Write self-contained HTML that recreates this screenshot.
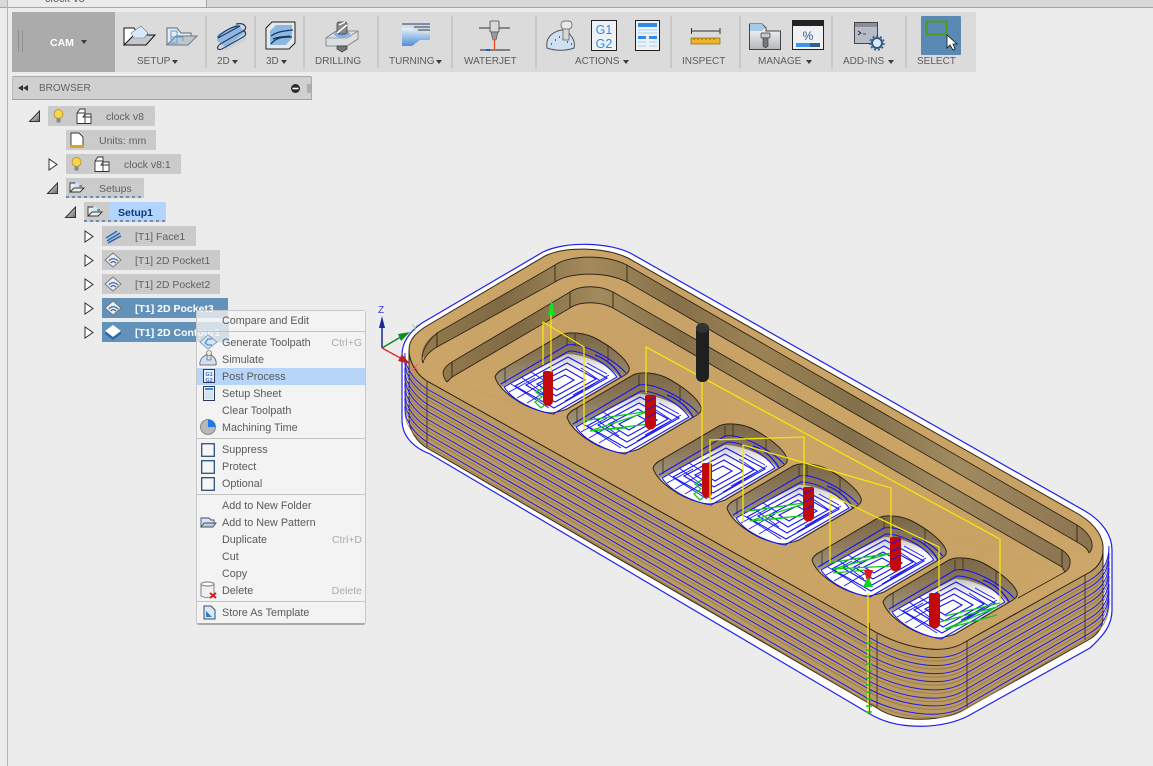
<!DOCTYPE html>
<html><head><meta charset="utf-8"><title>CAM</title>
<style>
html,body{margin:0;padding:0;width:1153px;height:766px;overflow:hidden;background:#ececec;font-family:"Liberation Sans",sans-serif}
.a{position:absolute}
.t{position:absolute;white-space:nowrap;font-size:10px;line-height:12px;color:#5c5c5c;margin-top:2px}
.b{position:absolute;background:#cbcbcb;height:20px}
.r{position:absolute;white-space:nowrap;font-size:10.5px;line-height:12px;color:#606060;margin-top:1px}
.m{position:absolute;left:222px;white-space:nowrap;font-size:10.8px;line-height:12px;color:#5a5a5a;margin-top:1px}
.k{position:absolute;right:791px;white-space:nowrap;font-size:10.5px;line-height:12px;color:#ababab;margin-top:1px}
.s{position:absolute;left:197px;width:168px;height:1px;background:#c4c4c4}
svg{position:absolute;left:0;top:0}
</style></head><body>
<div class="a" style="left:0;top:0;width:1153px;height:7px;background:#d8d8d8"></div>
<div class="a" style="left:8px;top:0;width:199px;height:7px;background:#ececec"></div>
<div class="a" style="left:0;top:7px;width:1153px;height:1px;background:#a6a6a6"></div>
<div class="a" style="left:206px;top:0;width:1px;height:7px;background:#a6a6a6"></div>
<div class="a" style="left:7px;top:0;width:1px;height:766px;background:#b4b4b4"></div>
<div class="t" style="left:45px;top:-9px;font-size:11px">clock v8</div>

<svg width="1153" height="766" viewBox="0 0 1153 766">
<defs>
<linearGradient id="wd" gradientUnits="userSpaceOnUse" x1="409" y1="250" x2="1103" y2="650"><stop offset="0" stop-color="#cda768"/><stop offset=".3" stop-color="#c7a166"/><stop offset=".55" stop-color="#cba566"/><stop offset=".8" stop-color="#c8a164"/><stop offset="1" stop-color="#cfaa6c"/></linearGradient>
<linearGradient id="wl" x1="0" y1="0" x2="1" y2="0"><stop offset="0" stop-color="#94794c"/><stop offset=".12" stop-color="#7f6a45"/><stop offset=".25" stop-color="#a38a5c"/><stop offset=".38" stop-color="#85704a"/><stop offset=".5" stop-color="#9c8355"/><stop offset=".65" stop-color="#83704c"/><stop offset=".8" stop-color="#a08a60"/><stop offset="1" stop-color="#8b7350"/></linearGradient>
<linearGradient id="pw" x1="0" y1="0" x2="0" y2="1"><stop offset="0" stop-color="#7a6748"/><stop offset=".35" stop-color="#8d7a5a"/><stop offset="1" stop-color="#b9b2a2"/></linearGradient>
<linearGradient id="pf" x1="0" y1="0" x2="0" y2="1"><stop offset="0" stop-color="#c4c4c4"/><stop offset=".3" stop-color="#fff"/></linearGradient>
<g id="ln" fill="none">
<path d="M405,353C404,368 415,381 427,389L867,636C895,654 940,666 965,650L1090,580C1102,573 1109,563 1109,546"/>
<path d="M405,360C404,375 415,388 427,396L867,644C895,662 940,674 965,658L1090,587C1102,580 1109,570 1109,553"/>
<path d="M405,368C404,383 415,396 427,404L867,654C895,670 940,682 965,666L1090,595C1102,588 1109,578 1109,561"/>
<path d="M405,375C404,390 415,403 427,411L867,662C895,678 940,690 965,674L1090,602C1102,595 1109,585 1109,568"/>
<path d="M405,383C404,398 415,411 427,419L867,671C895,687 940,698 965,682L1090,610C1102,603 1109,593 1109,576"/>
<path d="M405,391C404,406 415,419 427,427L867,680C895,696 940,706 965,690L1090,618C1102,611 1109,601 1109,584"/>
<path d="M405,398C404,413 415,426 427,434L867,688C895,703 940,714 965,698L1090,625C1102,618 1109,608 1109,591"/>
<path d="M405,406C404,421 415,434 427,442L867,698C895,712 940,722 965,706L1090,633C1102,626 1109,616 1109,599"/>
</g>
<g id="pk">
<path d="M0,0C1,-3 4,-6 8,-8L66,-42C74,-46 90,-44 100,-39C115,-31 130,-20 134,-10C135,-6 133,-4 130,-2L72,32C62,36 54,36 46,34C28,30 4,14 0,0Z" fill="url(#pw)" stroke="#2e2616" stroke-width="1"/>
<path d="M7,10L72,-23C88,-23 115,-12 124,0L72,31C62,36 54,36 46,34C32,30 16,21 7,10Z" fill="url(#pf)"/>
<path d="M72,-42V-31M80,-44V-31M113,-31V-14M10,-9V6" stroke="#3a2f1c" stroke-width=".8" fill="none"/>
<g fill="none" stroke="#1414f0" stroke-width="1.100">
<path d="M6,7L72,-32C88,-35 118,-18 131,-4"/>
<path d="M9,10L74,-26C90,-26 112,-14 122,0L58,37C40,34 18,24 9,10Z"/>
<path d="M20,9L73,-20L112,1L59,31Z"/>
<path d="M31,8L72,-14L101,2L60,25Z"/>
<path d="M42,7L71,-8L90,3L61,19Z"/>
<path d="M52,7L70,-2L79,3L62,13Z"/>
<path d="M14,15L40,1M22,21L48,6M32,26L52,14M26,0L52,19M36,-5L50,4M16,7L54,31" stroke-width=".8"/>
<path d="M92,-14L112,-3M86,-9L104,3M78,18L105,3M70,24L114,-2" stroke-width=".8"/>
<path d="M100,-22C112,-18 122,-8 126,0" stroke-width="1.300"/>
</g>
</g>
</defs>

<!-- outer contour -->
<path d="M402,355C402,340 412,330 422,323L543,252C565,241 610,242 632,254L1085,511C1102,521 1112,535 1112,550V610C1112,625 1104,635 1090,648L968,716C945,728 900,732 870,714L430,454C412,447 402,435 402,420Z" fill="#fff" stroke="#2020ee" stroke-width="1.200"/>
<!-- side -->
<path d="M409,350C409,362 417,375 427,381L867,627C895,645 940,658 965,642L1090,572C1098,567 1103,560 1103,550V617C1103,627 1098,634 1090,639L967,708C945,722 900,724 877,708L427,448C417,442 409,430 409,419Z" fill="#bb9a62" stroke="#2e2616" stroke-width="1"/>
<use href="#ln" y="3.500" stroke="#94784a" stroke-width=".8"/>
<path d="M427,381V448M877,634V707M967,641V707M1085,575V640" stroke="#4a3b25" stroke-width="1"/>
<use href="#ln" stroke="#1a1af0" stroke-width="1"/>
<!-- top face -->
<path d="M409,350C409,338 418,332 425,327L545,256C565,246 605,247 628,258L1080,515C1096,525 1104,538 1103,550C1103,560 1098,567 1090,572L965,642C940,658 895,645 867,627L427,381C417,375 409,362 409,350Z" fill="url(#wd)" stroke="#2e2616" stroke-width="1"/>
<!-- wall 1 -->
<path d="M422,357C421,347 428,338 437,333L555,265C570,255 605,254 627,265L1077,525C1088,532 1093,540 1092,547C1092,550 1090,552 1089,553Z" fill="url(#wl)"/>
<path d="M423,363C424,357 430,351 437,347L555,282C570,272 605,271 627,282L1077,542C1084,546 1088,549 1089,553Z" fill="url(#wd)"/>
<path d="M423,363C421,359 421,347 437,333L555,265C570,255 605,254 627,265L1077,525C1088,532 1093,540 1092,547C1092,550 1090,552 1089,553M423,363C424,357 430,351 437,347L555,282C570,272 605,271 627,282L1077,542C1084,546 1088,549 1089,553" fill="none" stroke="#2e2616" stroke-width=".9"/>
<path d="M437,333V347M555,265V282M627,265V282M1077,525V542" stroke="#2e2616" stroke-width=".9"/>
<!-- wall 2 -->
<path d="M443,372C444,368 447,365 452,362L570,292C580,285 600,285 613,292L1062,550C1068,554 1071,559 1070,563C1070,567 1068,570 1065,572L447,382C445,380 443,376 443,372Z" fill="url(#wl)"/>
<path d="M447,382C448,381 450,379 452,377L570,308C580,301 600,301 613,308L1062,567L1065,572Z" fill="url(#wd)"/>
<path d="M447,382C445,380 443,376 443,372C444,368 447,365 452,362L570,292C580,285 600,285 613,292L1062,550C1068,554 1071,559 1070,563C1070,567 1068,570 1065,572M447,382C448,381 450,379 452,377L570,308C580,301 600,301 613,308L1062,567L1065,572L1018,598" fill="none" stroke="#2e2616" stroke-width=".9"/>
<path d="M452,362V377M570,292V308M613,292V308M1062,550V567" stroke="#2e2616" stroke-width=".9"/>

<!-- pockets -->
<use href="#pk" x="495" y="377"/>
<use href="#pk" x="567" y="417"/>
<use href="#pk" x="653" y="468"/>
<use href="#pk" x="727" y="508"/>
<use href="#pk" x="812" y="560"/>
<use href="#pk" x="883" y="602"/>

<!-- green leads -->
<g fill="none" stroke="#12c81a" stroke-width="1.300">
<path d="M543,388L536,392L542,397L535,402L541,408L547,403"/>
<path d="M702,480L695,484L701,489L694,494L700,500L706,495"/>
<path d="M583,421L650,411L590,431L650,424M590,431L625,428"/>
<path d="M742,512L810,502L750,521L810,515M750,521L785,518"/>
<path d="M828,563L892,553L833,569L892,566M833,573L867,570"/>
<path d="M940,622L997,607L945,629L997,615M945,616L1000,603"/>
</g>
<!-- red plunges -->
<g fill="#c30a0a">
<rect x="543" y="371" width="10" height="31" rx="2"/><circle cx="548" cy="401" r="5"/>
<rect x="645" y="395" width="11" height="30" rx="2"/><circle cx="650.500" cy="424" r="5.500"/>
<rect x="702" y="463" width="10" height="31" rx="2"/><circle cx="707" cy="493" r="5"/>
<rect x="803" y="487" width="11" height="30" rx="2"/><circle cx="808.500" cy="516" r="5.500"/>
<rect x="890" y="537" width="11" height="30" rx="2"/><circle cx="895.500" cy="566" r="5.500"/>
<rect x="929" y="593" width="11" height="31" rx="2"/><circle cx="934.500" cy="623" r="5.500"/>
</g>
<g fill="none" stroke="#1414f0" stroke-width="1.200" opacity=".85">
<path d="M646,402L656,397M646,410L656,405M646,418L656,413M804,494L814,489M804,502L814,497M804,510L814,505M891,544L901,539M891,552L901,547M891,560L901,555"/>
</g>
<!-- yellow -->
<g fill="none" stroke="#f2e60a" stroke-width="1.300">
<path d="M551,315V372M543,322V365M543,322L584,347L584,430M646,393V347L1000,539V603"/>
<path d="M702,380V463M710,502V440L804,437V487M743,522V445L891,488V537M830,563V495L939,547V593"/>
<path d="M868,593V713"/>
</g>
<path d="M869.500,623V713" stroke="#a82020" stroke-width="1"/>
<path d="M866,643h6M866,650h6M866,657h6M866,664h6M866,671h6M866,678h6M866,685h6M866,692h6M866,699h6M866,706h6M866,712h6" stroke="#12c81a" stroke-width="1.500"/>
<!-- small arrow -->
<path d="M864,570H873L868,585Z" fill="#e01818"/>
<path d="M868,577L863,587H873Z" fill="#10d020"/>
<!-- green arrow -->
<path d="M551.500,299L555,315H548Z" fill="#10e020"/>
<!-- black tool -->
<rect x="696" y="323" width="13" height="59" rx="6" fill="#1f1f1f"/>
<ellipse cx="702.500" cy="328" rx="6.500" ry="5" fill="#333"/>
<!-- triad -->
<path d="M382,348V322" stroke="#1a2a90" stroke-width="1.500"/><path d="M382,316L385,328H379Z" fill="#1a2a90"/>
<path d="M382,348L404,335" stroke="#128a20" stroke-width="1.500"/><path d="M410,332L401,341L398,334Z" fill="#128a20"/>
<path d="M382,348L404,360" stroke="#d83030" stroke-width="1.500"/><path d="M410,364L398,361L402,354Z" fill="#c02020"/>
<text x="378" y="313" font-size="10" fill="#3a3ae0" font-family="Liberation Sans">Z</text>
<text x="412" y="331" font-size="9" fill="#7fd47f" font-family="Liberation Sans">Y</text>
<text x="412" y="371" font-size="10" fill="#e86060" font-family="Liberation Sans">X</text>
</svg>

<!-- toolbar -->
<div class="a" style="left:12px;top:12px;width:964px;height:60px;background:#dbdbdb"></div>
<div class="a" style="left:12px;top:12px;width:103px;height:60px;background:#ababab"></div>
<div class="t" style="left:50px;top:35px;color:#fff;font-size:10.500px;font-weight:bold">CAM</div>
<div class="a" style="left:18px;top:30px;width:5px;height:22px;border-left:1px solid #8f8f8f;border-right:1px solid #8f8f8f;box-sizing:border-box"></div>
<div class="a" style="left:921px;top:16px;width:40px;height:39px;background:#5a8ab3;border-radius:1px"></div>

<div class="t" style="left:137px;top:54px">SETUP</div>
<div class="t" style="left:217px;top:54px">2D</div>
<div class="t" style="left:266px;top:54px">3D</div>
<div class="t" style="left:315px;top:54px">DRILLING</div>
<div class="t" style="left:389px;top:54px">TURNING</div>
<div class="t" style="left:464px;top:54px">WATERJET</div>
<div class="t" style="left:575px;top:54px">ACTIONS</div>
<div class="t" style="left:682px;top:54px">INSPECT</div>
<div class="t" style="left:758px;top:54px">MANAGE</div>
<div class="t" style="left:843px;top:54px">ADD-INS</div>
<div class="t" style="left:917px;top:54px">SELECT</div>

<svg width="1153" height="100" viewBox="0 0 1153 100">
<defs>
<linearGradient id="g1" x1="0" y1="0" x2="0" y2="1"><stop offset="0" stop-color="#fff"/><stop offset="1" stop-color="#b4b8bc"/></linearGradient>
<linearGradient id="g2" x1="0" y1="0" x2="0" y2="1"><stop offset="0" stop-color="#e8f2fb"/><stop offset="1" stop-color="#4d8fd6"/></linearGradient>
</defs>
<g fill="#3c3c3c"><path d="M81,40h6l-3,4zM172,60h6l-3,4zM232,60h6l-3,4zM281,60h6l-3,4zM436,60h6l-3,4zM623,60h6l-3,4zM806,60h6l-3,4zM888,60h6l-3,4z"/></g>
<g fill="#c8c8c8"><rect x="205" y="16" width="2" height="52"/><rect x="254" y="16" width="2" height="52"/><rect x="303" y="16" width="2" height="52"/><rect x="377" y="16" width="2" height="52"/><rect x="451" y="16" width="2" height="52"/><rect x="535" y="16" width="2" height="52"/><rect x="670" y="16" width="2" height="52"/><rect x="739" y="16" width="2" height="52"/><rect x="831" y="16" width="2" height="52"/><rect x="905" y="16" width="2" height="52"/></g>

<!-- setup 1 -->
<path d="M124,45V28H134L138,34H147V36" fill="#fff" stroke="#111" stroke-width="1"/>
<path d="M124,45L134,35H155L146,45Z" fill="#c4c8cc" stroke="#111" stroke-width="1"/>
<path d="M131,33L141,26L148,33L144,38H134Z" fill="#d6e9fb" stroke="#777" stroke-width=".6"/>
<!-- setup 2 -->
<path d="M167,45V28H177L181,33H191V36" fill="#e8ebef" stroke="#5a6a7a" stroke-width="1"/>
<path d="M167,45L176,36H197L188,45Z" fill="#c2c6cb" stroke="#6a7a8a" stroke-width="1"/>
<path d="M171,31h6v6h-6zM171,37h6v6h-6zM177,37h6v4" fill="none" stroke="#5aa2e0" stroke-width="1"/>
<!-- 2D -->
<path d="M218,43L226,51L246,40V36L226,47Z" fill="#cdd1d4"/>
<path d="M217,35L237,24L246,32L226,47L217,41Z" fill="#8fb7dd"/>
<path d="M236,24C246,22 248,29 243,31L222,43C215,47 217,51 222,49L243,37C247,35 246,31 243,31M218,38L240,26C232,26 220,33 218,38" fill="none" stroke="#1f3f70" stroke-width="1.200"/>
<!-- 3D -->
<path d="M266,28L272,22H295V43L289,49H266Z" fill="#e6e9ec" stroke="#222" stroke-width="1"/>
<path d="M270,31L276,25H292V38L286,45H270Z" fill="#8db8e0"/>
<path d="M271,36C278,31 285,31 293,30M271,44C276,37 284,37 292,37M273,39C280,36 286,37 290,36" fill="none" stroke="#1b3666" stroke-width="1.300"/>
<!-- drilling -->
<path d="M326,38L336,31H358V39L347,46H326Z" fill="#dcdfe2" stroke="#777" stroke-width=".8"/>
<path d="M326,38H347L358,31" fill="none" stroke="#888" stroke-width=".8"/>
<ellipse cx="342" cy="34" rx="8" ry="3.500" fill="#7fb0e0"/>
<rect x="337" y="22" width="10" height="12" rx="2" fill="#8a8a8a" stroke="#333" stroke-width=".7"/>
<path d="M337,33L347,25M339,25L345,22" stroke="#fff" stroke-width="1.500"/>
<path d="M337,46H347V49L342,52L337,49Z" fill="#777" stroke="#333" stroke-width=".7"/>
<!-- turning -->
<path d="M402,24H430M414,27H430M418,30H430" stroke="#1f3f70" stroke-width="1"/>
<path d="M402,28H412L420,33H430V40H420L412,46H402Z" fill="url(#g2)"/>
<!-- waterjet -->
<path d="M479,28H490M499,28H510" stroke="#333" stroke-width="1"/>
<rect x="490" y="21" width="9" height="11" rx="1" fill="#d8dadc" stroke="#444" stroke-width=".8"/>
<path d="M491,32H498L496,40H493Z" fill="#9a9a9a" stroke="#444" stroke-width=".6"/>
<path d="M494.500,40V49" stroke="#e8401c" stroke-width="1.200"/>
<path d="M480,50H510" stroke="#7f7f7f" stroke-width="2"/><path d="M486,50H490" stroke="#2060c0" stroke-width="2"/>
<!-- joystick -->
<path d="M547,48C545,36 555,31 562,30C570,32 576,40 574,48C566,51 555,51 547,48Z" fill="#cfe0f2" stroke="#555" stroke-width="1"/>
<rect x="563" y="28" width="6" height="12" fill="#d8d8d8" stroke="#555" stroke-width=".7"/>
<rect x="561" y="21" width="11" height="8" rx="3.500" fill="#e8e8e8" stroke="#555" stroke-width=".7"/>
<path d="M551,44h1M555,40h1M559,37h1M567,42h1M571,44h1" stroke="#1f3f70" stroke-width="1.400"/>
<!-- G1G2 -->
<rect x="591.500" y="20.500" width="25" height="30" fill="#eef2f6" stroke="#222" stroke-width="1"/>
<text x="604" y="34" text-anchor="middle" font-family="Liberation Sans" font-size="12.500" fill="#2f8be8">G1</text>
<text x="604" y="48" text-anchor="middle" font-family="Liberation Sans" font-size="12.500" fill="#2f8be8">G2</text>
<!-- sheet -->
<rect x="635.500" y="20.500" width="24" height="30" fill="#eef2f6" stroke="#222" stroke-width="1"/>
<path d="M638,23h19v4h-19zM638,36h8v3h-8zM649,36h8v3h-8z" fill="#2f8be8"/>
<path d="M638,30h19M638,33h19M638,42h8M649,42h8M638,46h8M649,46h8" stroke="#a8cdf0" stroke-width="1"/>
<!-- ruler -->
<path d="M691.500,28V34M720,28V34M691.500,31H720" stroke="#333" stroke-width="1"/>
<rect x="691" y="38" width="29" height="6" fill="#f0b428" stroke="#8a6410" stroke-width=".7"/>
<path d="M694,38v2M698,38v2M702,38v2M706,38v2M710,38v2M714,38v2" stroke="#6a4c08" stroke-width=".7"/>
<!-- manage folder -->
<path d="M749.500,49.500V24H762L766,28V31H780.500V49.500Z" fill="url(#g1)" stroke="#444" stroke-width="1"/>
<path d="M750,24H762L765,28L762,31H750Z" fill="#a5cbe8"/>
<rect x="761" y="33" width="9" height="5" rx="1" fill="#c8c8c8" stroke="#333" stroke-width=".7"/>
<path d="M763,38H768V46L765.500,48L763,46Z" fill="#777" stroke="#333" stroke-width=".6"/>
<!-- percent -->
<rect x="792.500" y="20.500" width="31" height="29" fill="#eef0f3" stroke="#222" stroke-width="1"/>
<rect x="792" y="20" width="32" height="6" fill="#222"/>
<text x="808" y="40" text-anchor="middle" font-family="Liberation Sans" font-size="12" fill="#2c5a88">%</text>
<rect x="796" y="43" width="14" height="4" fill="#3f92ea"/><rect x="810" y="43" width="10" height="4" fill="#2f5f8f"/>
<!-- add-ins -->
<rect x="854.500" y="22.500" width="23" height="21" fill="#b8bcc8" stroke="#444" stroke-width="1"/>
<rect x="855" y="23" width="22" height="4" fill="#8a8e96"/>
<path d="M858,31L861,33L858,35M863,34H866" fill="none" stroke="#222" stroke-width=".8"/>
<circle cx="877" cy="43" r="5" fill="#dfe6ef" stroke="#2c5a88" stroke-width="2"/>
<circle cx="877" cy="43" r="7" fill="none" stroke="#2c5a88" stroke-width="1.500" stroke-dasharray="2 2"/>
<!-- select -->
<rect x="926.500" y="21.500" width="20" height="13" fill="none" stroke="#4f9a18" stroke-width="2"/>
<path d="M947,35V48L950,45L953,50L955,49L953,44H957Z" fill="#fff" stroke="#111" stroke-width=".8"/>
</svg>

<!-- browser bar -->
<div class="a" style="left:12px;top:76px;width:300px;height:24px;background:#d0d0d0;border-top:1px solid #a9a9a9;border-left:1px solid #bbb;border-right:1px solid #a9a9a9;box-sizing:border-box;border-radius:2px 2px 0 0"></div>
<div class="a" style="left:12px;top:99px;width:300px;height:1px;background:#a0a0a0"></div>
<div class="t" style="left:39px;top:81px;color:#626262;font-size:10px">BROWSER</div>

<!-- tree -->
<div class="b" style="left:48px;top:106px;width:107px"></div>
<div class="b" style="left:66px;top:130px;width:90px"></div>
<div class="b" style="left:66px;top:154px;width:115px"></div>
<div class="b" style="left:66px;top:178px;width:78px"></div>
<div class="b" style="left:84px;top:202px;width:25px"></div>
<div class="b" style="left:109px;top:202px;width:57px;background:#b3d4fc"></div>
<div class="b" style="left:102px;top:226px;width:94px"></div>
<div class="b" style="left:102px;top:250px;width:118px"></div>
<div class="b" style="left:102px;top:274px;width:118px"></div>
<div class="b" style="left:102px;top:298px;width:126px;background:#6292b9"></div>
<div class="b" style="left:102px;top:322px;width:134px;background:#6292b9"></div>

<div class="r" style="left:106px;top:110px">clock v8</div>
<div class="r" style="left:99px;top:134px">Units: mm</div>
<div class="r" style="left:124px;top:158px">clock v8:1</div>
<div class="r" style="left:99px;top:182px">Setups</div>
<div class="r" style="left:118px;top:206px;color:#0a3a80;font-weight:bold">Setup1</div>
<div class="r" style="left:135px;top:230px">[T1] Face1</div>
<div class="r" style="left:135px;top:254px">[T1] 2D Pocket1</div>
<div class="r" style="left:135px;top:278px">[T1] 2D Pocket2</div>
<div class="r" style="left:135px;top:302px;color:#fff;font-weight:bold">[T1] 2D Pocket3</div>
<div class="r" style="left:135px;top:326px;color:#fff;font-weight:bold">[T1] 2D Contour1</div>

<svg width="400" height="350" viewBox="0 0 400 350">
<!-- browser bar icons -->
<path d="M18,88L23,85V91ZM23,88L28,85V91Z" fill="#333"/>
<circle cx="295.500" cy="88.500" r="4.500" fill="#2a2a2a"/><rect x="292.500" y="87.700" width="6" height="1.600" fill="#fff"/>
<path d="M308,84V93M310,84V93" stroke="#8a8a8a" stroke-width="1"/>
<!-- triangles -->
<defs><linearGradient id="tg" x1="0" y1="0" x2="1" y2="1"><stop offset="0" stop-color="#fff"/><stop offset="1" stop-color="#666"/></linearGradient></defs>
<g fill="url(#tg)" stroke="#333" stroke-width="1">
<path d="M29.500,121.500H39.500V111Z"/><path d="M47.500,193.500H57.500V183Z"/><path d="M65.500,217.500H75.500V207Z"/>
</g>
<g fill="#fff" stroke="#333" stroke-width="1">
<path d="M49,159V170L57,164.500Z"/><path d="M85,231V242L93,236.500Z"/><path d="M85,255V266L93,260.500Z"/><path d="M85,279V290L93,284.500Z"/><path d="M85,303V314L93,308.500Z"/><path d="M85,327V338L93,332.500Z"/>
</g>
<!-- bulbs -->
<g><circle cx="58.500" cy="114" r="4.500" fill="#f7d44a" stroke="#a88a20" stroke-width=".7"/><rect x="56.500" y="118.500" width="4" height="4" fill="#8a8a8a"/></g>
<g><circle cx="76.500" cy="162" r="4.500" fill="#f7d44a" stroke="#a88a20" stroke-width=".7"/><rect x="74.500" y="166.500" width="4" height="4" fill="#8a8a8a"/></g>
<!-- component -->
<g fill="#fff" stroke="#333" stroke-width=".9">
<path d="M77,123.500V113L80,109H85V114H91V123.500Z"/><path d="M77,113H85V123.500M85,114L83,117H91"/>
<path d="M95,171.500V161L98,157H103V162H109V171.500Z"/><path d="M95,161H103V171.500M103,162L101,165H109"/>
</g>
<!-- units -->
<path d="M71,133H79L83,137V146H71Z" fill="#fff" stroke="#333" stroke-width=".9"/><rect x="70" y="145" width="14" height="3" fill="#e0a020"/>
<!-- setups hatch -->
<path d="M66,197L144,197" stroke="#6f8db0" stroke-width="2" stroke-dasharray="3 3"/>
<path d="M84,221L166,221" stroke="#6f8db0" stroke-width="2" stroke-dasharray="3 3"/>
<g fill="none" stroke="#333" stroke-width=".9">
<path d="M70,192V183H75L77,186H82M70,192L74,188H84L80,192Z" fill="#eee"/>
<path d="M88,216V207H93L95,210H100M88,216L92,212H102L98,216Z" fill="#eee"/>
</g>
<circle cx="77" cy="185" r="2.500" fill="#cfe4fa"/><circle cx="95" cy="209" r="2.500" fill="#cfe4fa"/>
<!-- op icons -->
<path d="M106,238L116,231L121,235L110,243Z" fill="#9dbfe0"/>
<g fill="none" stroke="#2f5f9a" stroke-width="1.300"><path d="M106,238L117,231M107,241L120,233M108,243L121,236"/></g>
<g id="p1"><path d="M105,260L113,253L121,260L113,267Z" fill="#ececec" stroke="#777" stroke-width=".9"/><path d="M109,261C111,258 115,258 118,261M111,263C112,261 114,261 116,263" fill="none" stroke="#2f6fb8" stroke-width="1.300"/></g>
<use href="#p1" y="24"/><use href="#p1" y="48"/>
<path d="M105,331L113,325L121,331L113,337Z" fill="#fff"/><path d="M105,331V334L113,340L121,334V331L113,337Z" fill="#2e6aa8"/>
</svg>

<!-- menu -->
<div class="a" style="left:196px;top:310px;width:170px;height:315px;background:rgba(243,243,243,.78);border:1px solid #c8c8c8;border-bottom:2px solid #aaa;box-sizing:border-box;border-radius:3px"></div>
<div class="a" style="left:229px;top:311px;width:136px;height:312px;background:#f3f3f3"></div>
<div class="a" style="left:197px;top:344px;width:168px;height:279px;background:#f3f3f3"></div>
<div class="a" style="left:197px;top:368px;width:168px;height:17px;background:#b6d5f8"></div>
<div class="s" style="top:331px"></div><div class="s" style="top:438px"></div><div class="s" style="top:494px"></div><div class="s" style="top:601px"></div>
<div class="m" style="top:314px">Compare and Edit</div>
<div class="m" style="top:336px">Generate Toolpath</div><div class="k" style="top:336px">Ctrl+G</div>
<div class="m" style="top:353px">Simulate</div>
<div class="m" style="top:370px">Post Process</div>
<div class="m" style="top:387px">Setup Sheet</div>
<div class="m" style="top:404px">Clear Toolpath</div>
<div class="m" style="top:421px">Machining Time</div>
<div class="m" style="top:443px">Suppress</div>
<div class="m" style="top:460px">Protect</div>
<div class="m" style="top:477px">Optional</div>
<div class="m" style="top:499px">Add to New Folder</div>
<div class="m" style="top:516px">Add to New Pattern</div>
<div class="m" style="top:533px">Duplicate</div><div class="k" style="top:533px">Ctrl+D</div>
<div class="m" style="top:550px">Cut</div>
<div class="m" style="top:567px">Copy</div>
<div class="m" style="top:584px">Delete</div><div class="k" style="top:584px">Delete</div>
<div class="m" style="top:606px">Store As Template</div>

<svg width="400" height="640" viewBox="0 0 400 640">
<!-- generate -->
<path d="M200,342L208,335L217,342L208,349Z" fill="#d8e6f4" stroke="#8aa0b8" stroke-width="1"/>
<path d="M205,343L208,339H212M205,343L208,345H212" fill="none" stroke="#3f8fe8" stroke-width="1.300"/>
<!-- simulate -->
<path d="M200,365C199,358 205,355 209,354C214,356 217,360 216,365Z" fill="#cfe0f2" stroke="#555" stroke-width=".8"/>
<rect x="207" y="352" width="4" height="8" fill="#ddd" stroke="#555" stroke-width=".6"/><circle cx="209" cy="353" r="2.500" fill="#eee" stroke="#555" stroke-width=".6"/>
<!-- G1G2 small -->
<rect x="203.500" y="369.500" width="11" height="13" fill="#eef2f6" stroke="#2a3a5a" stroke-width="1"/>
<text x="209" y="376" text-anchor="middle" font-family="Liberation Sans" font-size="5.500" font-weight="bold" fill="#2f6fd0">G1</text>
<text x="209" y="382" text-anchor="middle" font-family="Liberation Sans" font-size="5.500" font-weight="bold" fill="#2f6fd0">G2</text>
<!-- sheet -->
<rect x="203.500" y="386.500" width="11" height="14" fill="#eef2f6" stroke="#2a3a5a" stroke-width="1"/>
<path d="M205,388h8v2h-8z" fill="#2f8be8"/><path d="M205,392h8M205,394h8M205,396h8M205,398h8" stroke="#9cc6ee" stroke-width=".8"/>
<!-- clock -->
<circle cx="208" cy="427" r="7.500" fill="#b8b8b8" stroke="#777" stroke-width=".8"/>
<path d="M208,427V419.500A7.500,7.500 0 0 1 215.500,427Z" fill="#1e7ae8"/>
<!-- checks -->
<g fill="#f6f6f6" stroke="#27527f" stroke-width="1.300">
<rect x="201.700" y="443.700" width="12.600" height="12.600"/><rect x="201.700" y="460.700" width="12.600" height="12.600"/><rect x="201.700" y="477.700" width="12.600" height="12.600"/>
</g>
<!-- pattern folder -->
<path d="M201,527V518H209L211,520H214V523" fill="#d8e6f4" stroke="#3a5070" stroke-width=".9"/>
<path d="M201,527L204,523H216L213,527Z" fill="#c8ccd0" stroke="#3a5070" stroke-width=".9"/>
<!-- delete -->
<path d="M201,584H214V596C210,598 205,598 201,596Z" fill="#eef0f2" stroke="#777" stroke-width=".9"/>
<ellipse cx="207.500" cy="584" rx="6.500" ry="2" fill="#fafafa" stroke="#777" stroke-width=".9"/>
<path d="M210,593L216,598M216,593L210,598" stroke="#d81818" stroke-width="1.800"/>
<!-- template -->
<path d="M204,606H211L215,610V619H204Z" fill="#dce8f4" stroke="#27527f" stroke-width="1"/>
<path d="M206,617V611L212,617Z" fill="#3a78b8"/>
</svg>
</body></html>
